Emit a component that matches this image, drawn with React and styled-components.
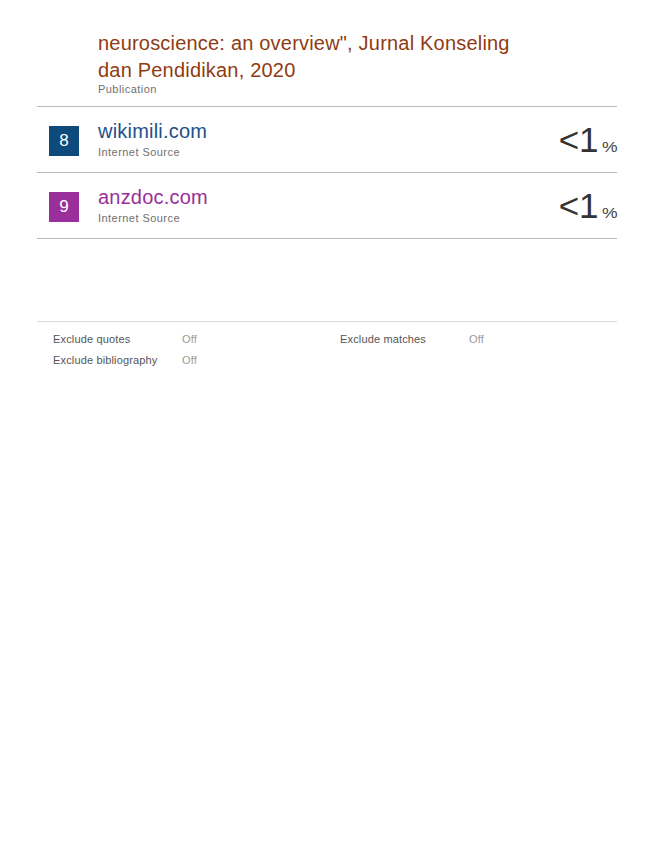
import React from "react";
import styled, { createGlobalStyle } from "styled-components";

const GlobalStyle = createGlobalStyle`
  body {
    margin: 0;
    background: #fff;
    font-family: "Liberation Sans", Arial, sans-serif;
  }
`;

const sources = [
  { rank: 8, name: "wikimili.com", type: "Internet Source", color: "#0f4a7d", text: "#1d5189" },
  { rank: 9, name: "anzdoc.com", type: "Internet Source", color: "#9a2e9a", text: "#9a2e9a" },
];

const App = () => (
  <Page>
    <GlobalStyle />
    <TopEntry>
      <Title color="#8f3b12">
        neuroscience: an overview", Jurnal Konseling
        <br />
        dan Pendidikan, 2020
      </Title>
      <Kind>Publication</Kind>
    </TopEntry>
    {sources.map((s) => (
      <Row key={s.rank}>
        <Badge $bg={s.color}>{s.rank}</Badge>
        <Info>
          <Title color={s.text}>{s.name}</Title>
          <Kind $row>{s.type}</Kind>
        </Info>
        <Percent>
          &lt;1<Small>%</Small>
        </Percent>
      </Row>
    ))}
    <Footer>
      <Setting>
        <Label>Exclude quotes</Label>
        <Value>Off</Value>
      </Setting>
      <Setting>
        <Label>Exclude matches</Label>
        <Value>Off</Value>
      </Setting>
      <Setting>
        <Label>Exclude bibliography</Label>
        <Value>Off</Value>
      </Setting>
    </Footer>
  </Page>
);

const Page = styled.div`
  width: 580px;
  padding: 30px 0 0 37px;
`;

const TopEntry = styled.div`
  padding: 0 0 10px 61px;
  border-bottom: 1px solid #b8b8b8;
`;

const Title = styled.div`
  color: ${(p) => p.color};
  font-size: 20px;
  line-height: 27px;
  letter-spacing: 0.2px;
`;

const Kind = styled.div`
  color: #6f6f6f;
  font-size: 11px;
  line-height: 14px;
  letter-spacing: 0.45px;
  margin-top: ${(p) => (p.$row ? "0" : "-2px")};
`;

const Row = styled.div`
  display: flex;
  align-items: flex-start;
  height: 65px;
  border-bottom: 1px solid #b8b8b8;
`;

const Badge = styled.div`
  width: 30px;
  height: 30px;
  margin: 19px 19px 0 12px;
  background: ${(p) => p.$bg};
  color: #fff;
  font-size: 17px;
  display: flex;
  align-items: center;
  justify-content: center;
`;

const Info = styled.div`
  flex: 1;
  padding-top: 11px;
`;

const Percent = styled.div`
  color: #333;
  font-size: 35px;
  line-height: 40px;
  padding-top: 13px;
  padding-right: 3px;
`;

const Small = styled.span`
  display: inline-block;
  font-size: 14px;
  margin-left: 3px;
  color: #444;
  transform: scaleX(1.25);
  transform-origin: left;
`;

const Footer = styled.div`
  margin-top: 82px;
  border-top: 1px solid #dcdcdc;
  padding: 10px 0 0 16px;
  display: grid;
  grid-template-columns: 287px 1fr;
  row-gap: 7px;
`;

const Setting = styled.div`
  display: flex;
  font-size: 11px;
  line-height: 14px;
  letter-spacing: 0.15px;
`;

const Label = styled.span`
  color: #555;
  width: 129px;
`;

const Value = styled.span`
  color: #9a9a9a;
`;

export default App;
